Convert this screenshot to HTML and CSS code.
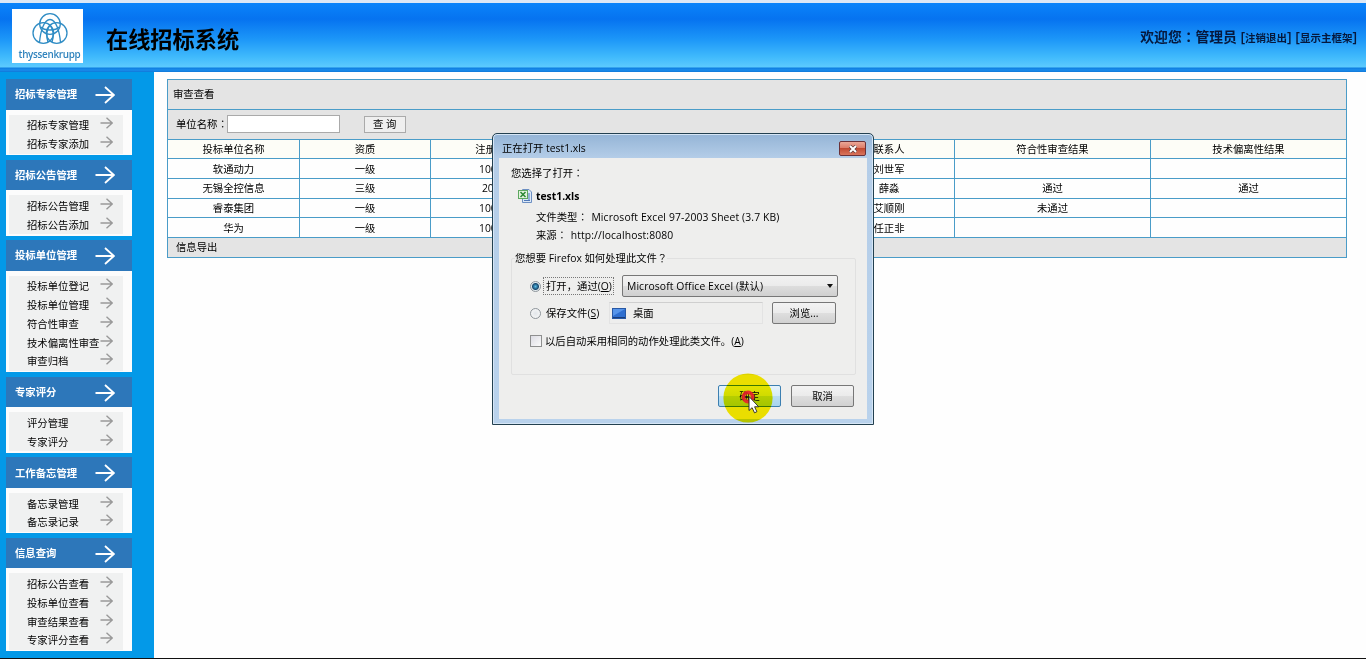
FILE: index.html
```html
<!DOCTYPE html>
<html lang="zh-CN">
<head>
  <meta charset="UTF-8">
  <title>在线招标系统</title>
  <link rel="stylesheet" href="styles.css">
</head>
<body>
  <svg class="defs" width="0" height="0">
    <symbol id="arrow-big" viewBox="0 0 20 18"><path d="M0.5 9H18.5M10 1L18.8 9L10 17" fill="none" stroke="currentColor" stroke-width="1.8"/></symbol>
    <symbol id="arrow" viewBox="0 0 13 12"><path d="M0.5 6H12M6.5 0.8L12.2 6L6.5 11.2" fill="none" stroke="currentColor" stroke-width="1.4"/></symbol>
  </svg>

  <div class="header">
    <div class="logo">
      <svg width="38" height="35" viewBox="0 0 38 35" fill="none" stroke="#2f8cc4" stroke-width="1.3">
        <circle cx="19" cy="12" r="10.3"/>
        <circle cx="12.3" cy="21" r="10.3"/>
        <circle cx="25.7" cy="21" r="10.3"/>
        <path d="M8.5 30.5C9.5 19 13 7.5 19 7.5S28.5 19 29.5 30.5"/>
        <path d="M10 15C13 19 25 19 28 15"/>
        <path d="M19 13C15.5 18 15 24 17 30M19 13C22.5 18 23 24 21 30"/>
      </svg>
      <span>thyssenkrupp</span>
    </div>
    <h1>在线招标系统</h1>
    <div class="welcome">欢迎您<span class="mark" lang="zh-TW">：</span>管理员 <a>[<i>注销退出</i>]</a> <a>[<i>显示主框架</i>]</a></div>
  </div>

  <div class="main">
    <div class="sidebar" id="sidebar"></div>

    <div class="content">
      <div class="panel">
        <div class="row title">审查查看</div>
        <div class="row search">
          <label>单位名称<b class="mark" lang="zh-TW">：</b></label>
          <input type="text">
          <button>查 询</button>
        </div>
        <div class="row head">
          <span>投标单位名称</span><span>资质</span><span>注册资金</span><span></span><span></span><span>联系人</span><span class="wide">符合性审查结果</span><span class="wide">技术偏离性结果</span>
        </div>
        <div class="row">
          <span>软通动力</span><span>一级</span><span>1000万</span><span></span><span></span><span>刘世军</span><span class="wide"></span><span class="wide"></span>
        </div>
        <div class="row">
          <span>无锡全控信息</span><span>三级</span><span>200万</span><span></span><span></span><span>薛淼</span><span class="wide">通过</span><span class="wide">通过</span>
        </div>
        <div class="row">
          <span>睿泰集团</span><span>一级</span><span>1000万</span><span></span><span></span><span>艾顺刚</span><span class="wide">未通过</span><span class="wide"></span>
        </div>
        <div class="row">
          <span>华为</span><span>一级</span><span>1000万</span><span></span><span></span><span>任正非</span><span class="wide"></span><span class="wide"></span>
        </div>
        <div class="row export">信息导出</div>
      </div>
    </div>
  </div>

  <div class="dialog">
    <div class="titlebar">
      <span>正在打开 test1.xls</span>
      <div class="close">
        <svg width="10" height="8" viewBox="0 0 10 8"><path d="M2 1L8 7M8 1L2 7" stroke="#5b3a3a" stroke-width="3.4"/><path d="M2 1L8 7M8 1L2 7" stroke="#fff" stroke-width="2"/></svg>
      </div>
    </div>
    <div class="dialog-body">
      <p class="chosen">您选择了打开<span class="mark" lang="zh-TW">：</span></p>
      <div class="file">
        <svg width="15" height="14" viewBox="0 0 15 14">
          <path d="M4.5 0.5H11L13.5 3V13.5H4.5Z" fill="#dce8f7" stroke="#6c8fc2"/>
          <path d="M11 4V12M6 11.5H12" stroke="#4f78b8"/>
          <rect x="0.5" y="1.5" width="9" height="8" fill="#e3f2de" stroke="#5da860"/>
          <path d="M2.5 3L7.5 8M7.5 3L2.5 8" stroke="#2b8733" stroke-width="1.5"/>
        </svg>
        <b>test1.xls</b>
      </div>
      <p class="info type">文件类型<b class="mark" lang="zh-TW">：</b> <span>Microsoft Excel 97-2003 Sheet (3.7 KB)</span></p>
      <p class="info source">来源<b class="mark" lang="zh-TW">：</b> <span>http://localhost:8080</span></p>
      <div class="group">
        <div class="legend">您想要 Firefox 如何处理此文件<span class="mark" lang="zh-TW">？</span></div>
        <div class="option">
          <i class="radio checked"></i>
          <span class="focus">打开，通过(<u>O</u>)</span>
          <div class="select">Microsoft Office Excel (默认)<i class="caret"></i></div>
        </div>
        <div class="option save">
          <i class="radio"></i>
          <span class="save-label">保存文件(<u>S</u>)</span>
          <div class="folder">
            <svg width="14" height="11" viewBox="0 0 14 11"><rect x="0.5" y="0.5" width="13" height="10" fill="#2f6fd0" stroke="#2858a4"/><path d="M1 1H13L1 8Z" fill="#5795ea"/><path d="M1 9.5H13" stroke="#1b3d78"/></svg>
            桌面
          </div>
          <div class="btn browse">浏览...</div>
        </div>
        <div class="option always">
          <i class="checkbox"></i>
          <span>以后自动采用相同的动作处理此类文件。(<u>A</u>)</span>
        </div>
      </div>
      <div class="buttons">
        <div class="btn ok">确定</div>
        <div class="btn cancel">取消</div>
      </div>
    </div>
    <svg class="highlight" width="52" height="52" viewBox="0 0 52 52">
      <circle cx="26" cy="26" r="24.6" fill="#fbee00"/>
    </svg>
    <svg class="pointer" width="52" height="52" viewBox="0 0 52 52">
      <circle cx="26" cy="25" r="4.6" fill="none" stroke="#e8202c" stroke-width="3.6" opacity="0.9"/>
      <path d="M27 24.5V38.5L30.1 35.7L32.5 40.8L34.9 39.7L32.6 34.8H36.7Z" fill="#fff" stroke="#222" stroke-width="0.9"/>
    </svg>
  </div>

  <script>
    const menu = [
      ["招标专家管理", ["招标专家管理", "招标专家添加"]],
      ["招标公告管理", ["招标公告管理", "招标公告添加"]],
      ["投标单位管理", ["投标单位登记", "投标单位管理", "符合性审查", "技术偏离性审查", "审查归档"]],
      ["专家评分", ["评分管理", "专家评分"]],
      ["工作备忘管理", ["备忘录管理", "备忘录记录"]],
      ["信息查询", ["招标公告查看", "投标单位查看", "审查结果查看", "专家评分查看"]]
    ];

    document.getElementById("sidebar").innerHTML = menu.map(([title, items]) => `
      <div class="menu">
        <div class="menu-title"><span>${title}</span><svg><use href="#arrow-big"/></svg></div>
        <div class="menu-body"><div class="menu-list">
          ${items.map(item => `<div class="menu-item"><span>${item}</span><svg><use href="#arrow"/></svg></div>`).join("")}
        </div></div>
      </div>`).join("");
  </script>
</body>
</html>
```
FILE: styles.css
```css
* {
  box-sizing: border-box;
}

body {
  margin: 0;
  height: 659px;
  overflow: hidden;
  display: flex;
  flex-direction: column;
  font-family: "Open Sans", "Noto Sans CJK SC", sans-serif;
  font-size: 10.35px;
  line-height: 16px;
  color: #000;
  background: #fefefe;
  border-bottom: 1px solid #111;
  white-space: nowrap;
}

p {
  margin: 0;
}

i {
  font-style: normal;
}

/* centred full-width punctuation */
.mark {
  font-family: "Noto Sans CJK TC", sans-serif;
  font-weight: inherit;
}

.defs {
  position: absolute;
}

.header {
  height: 72px;
  flex: none;
  display: flex;
  align-items: flex-start;
  border-top: 3px solid #dce8f6;
  background: linear-gradient(#0a84fa 0, #0673f0 16px, #1c96f8 36px, #40bafc 54px, #5ccafe 64px, #0d7de0 65px, #1a8cec 67px, #0f78d8 69px);
}

.logo {
  width: 71px;
  height: 54px;
  margin: 6px 0 0 12px;
  padding-top: 3px;
  background: #fff;
  display: flex;
  flex-direction: column;
  align-items: center;
}

.logo svg {
  flex: none;
  margin-left: 4px;
}

.logo span {
  font-family: "Open Sans", sans-serif;
  font-size: 9.9px;
  line-height: 12px;
  margin: 1px 0 0 4px;
  color: #2f83bd;
  font-weight: 600;
  letter-spacing: -0.3px;
}

h1 {
  margin: 21px 0 0 23px;
  font-size: 22.2px;
  line-height: 32px;
  font-weight: bold;
}

.welcome {
  margin: 23px 9px 0 auto;
  font-size: 13.8px;
  line-height: 20px;
  font-weight: 600;
  color: #06183c;
}

.welcome a {
  font-size: 14px;
}

.welcome a i {
  font-size: 10.5px;
}

.main {
  flex: 1;
  display: flex;
}

.sidebar {
  width: 154px;
  padding: 7px 0 0 6px;
  background: #0399e8;
}

.menu {
  width: 126px;
  margin-bottom: 4.5px;
}

.menu-title {
  height: 30.5px;
  padding: 0 17px 0 9px;
  display: flex;
  align-items: center;
  justify-content: space-between;
  background: #2d77ba;
  color: #fff;
  font-weight: bold;
}

.menu-title svg {
  width: 20px;
  height: 18px;
  margin-top: 1px;
}

.menu-body {
  padding: 5px 9px 1.5px 3px;
  background: #fcfcfc;
}

.menu-list {
  padding-top: 1.5px;
  background: #f0f1f1;
}

.menu-item {
  height: 18.75px;
  padding: 0 10px 0 18px;
  display: flex;
  align-items: center;
  justify-content: space-between;
}

.menu-item svg {
  width: 13px;
  height: 12px;
  flex: none;
  margin: -4px 0 0 -3px;
  color: #999;
}

.content {
  flex: 1;
  padding: 7px 19px 0 13px;
}

.panel {
  border: 1px solid #4a9cc8;
  border-top: 0;
}

.row {
  height: 19.7px;
  display: flex;
  align-items: center;
  border-top: 1px solid #4a9cc8;
  background: #fefefe;
}

.row > span {
  flex: 131;
  height: 100%;
  display: flex;
  align-items: center;
  justify-content: center;
  border-left: 1px solid #4a9cc8;
  min-width: 0;
}

.row > span:first-child {
  flex: 132;
  border-left: 0;
}

.row > .wide {
  flex: 196.5;
}

.row.title {
  height: 30px;
  padding: 0 0 1px 5px;
  background: #e4e4e4;
}

.row.search {
  height: 29.7px;
  padding-left: 8px;
  background: #e4e4e4;
}

.search input {
  width: 113px;
  height: 18px;
  margin-left: -1px;
  border: 1px solid #aaa;
  background: #fff;
}

.search button {
  width: 42px;
  height: 17px;
  margin-left: 24px;
  padding: 0;
  border: 1px solid #aaa;
  background: #efefef;
  font: inherit;
  line-height: 14px;
}

.row.head {
  background: #fdfdf7;
}

.row.export {
  padding-left: 8px;
  background: #e4e4e4;
}

/* Firefox download dialog */
.dialog {
  position: absolute;
  left: 492px;
  top: 133px;
  width: 382px;
  height: 292px;
  padding: 0 6px 5px;
  border: 1px solid #234050;
  border-radius: 5px 5px 0 0;
  background: linear-gradient(#94b4d6 0, #b4cde8 24px, #b9d2ec 100%);
  box-shadow: inset 0 0 0 1px #d6e6f6;
}

.titlebar {
  height: 24px;
  padding: 6px 1px 0 3px;
  display: flex;
  justify-content: space-between;
}

.close {
  width: 27px;
  height: 15px;
  margin-top: 1px;
  display: flex;
  align-items: center;
  justify-content: center;
  border: 1px solid #6b3138;
  border-radius: 2px;
  background: linear-gradient(#eba797, #dc7a66 48%, #c14a32 50%, #d9755c);
}

.dialog-body {
  height: 261px;
  padding: 7px 11px 0 12px;
  font-size: 10.35px;
  background: #eeeeed;
}

.file {
  display: flex;
  align-items: center;
  margin: 6px 0 0 7px;
  height: 18px;
}

.file b {
  margin-left: 3px;
}

.info {
  margin-left: 25px;
  line-height: 18px;
}

.type {
  margin-top: 3px;
}

.type span,
.source span {
  margin-left: 1px;
  letter-spacing: 0.12px;
}

.group {
  height: 117px;
  margin-top: 14px;
  border: 1px solid #e0e0e0;
  border-radius: 2px;
}

.legend {
  width: max-content;
  margin: -9px 0 0 3px;
  background: #eeeeed;
}

.option {
  display: flex;
  align-items: center;
  margin: 9px 0 0 18px;
  height: 22px;
}

.radio {
  width: 11px;
  height: 11px;
  border: 1px solid #8e959b;
  border-radius: 50%;
  background: radial-gradient(#e2e6ea, #fafafa);
}

.radio.checked {
  background: radial-gradient(#56bce8 0, #17496f 3px, #e4ebef 4px);
}

.focus {
  width: 71px;
  margin-left: 2px;
  padding: 0 1px 0 2px;
  border: 1px dotted #777;
}

.select {
  width: 216px;
  height: 22px;
  margin-left: 8px;
  padding: 0 4px;
  display: flex;
  align-items: center;
  justify-content: space-between;
  border: 1px solid #777;
  border-radius: 2px;
  background: linear-gradient(#f2f2f2, #ebebeb 50%, #dddddd 51%, #d0d0d0);
  letter-spacing: 0.1px;
}

.caret {
  border: 3.5px solid transparent;
  border-top: 4px solid #111;
  border-bottom: 0;
}

.option.save {
  margin-top: 5px;
}

.save-label {
  width: 54px;
  margin-left: 5px;
}

.folder {
  width: 154px;
  height: 22px;
  margin-left: 9px;
  padding-left: 2px;
  display: flex;
  align-items: center;
  gap: 7px;
  border: 1px solid #e3e3e3;
  border-top-color: #cfcfcf;
}

.btn {
  width: 64px;
  height: 22px;
  display: flex;
  align-items: center;
  justify-content: center;
  border: 1px solid #777;
  border-radius: 2px;
  background: linear-gradient(#f3f3f3, #ebebeb 50%, #dedede 51%, #d1d1d1);
}

.browse {
  margin-left: 9px;
}

.option.always {
  margin-top: 6px;
}

.checkbox {
  width: 12px;
  height: 12px;
  margin-right: 3px;
  border: 1px solid #8e8f8f;
  background: linear-gradient(135deg, #dcdce4, #fafafa);
}

.buttons {
  display: flex;
  justify-content: flex-end;
  gap: 10px;
  margin: 10px 2px 0 0;
}

.btn.ok {
  width: 63px;
  border-color: #3c7fb1;
  background: linear-gradient(#e6f3fb, #d4ebf8 50%, #b8ddf2 51%, #a8d4ee);
}

.btn.cancel {
  width: 63px;
}

.highlight,
.pointer {
  position: absolute;
  left: 229px;
  top: 238px;
}

.highlight {
  mix-blend-mode: multiply;
}
```
